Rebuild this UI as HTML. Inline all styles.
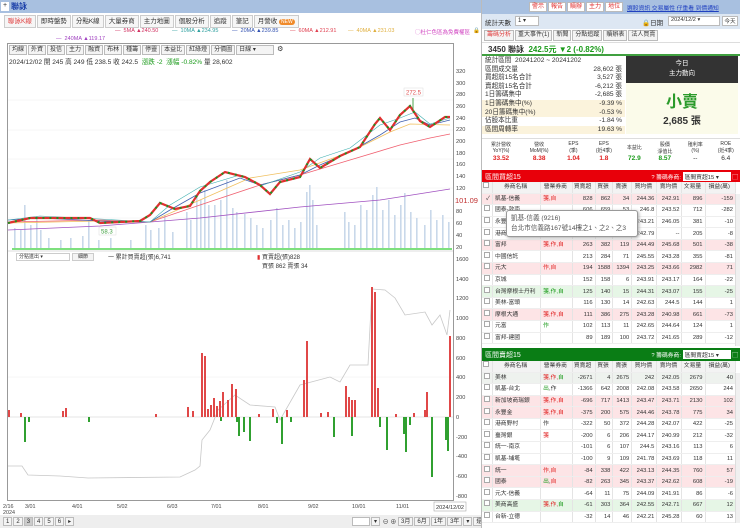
<!DOCTYPE html>
<html><head><meta charset="utf-8"><style>
*{box-sizing:border-box;margin:0;padding:0}
body{width:740px;height:528px;overflow:hidden;background:#fff;font-family:"Liberation Sans","Noto Sans CJK TC",sans-serif;font-size:7px;color:#333;position:relative}
.abs{position:absolute}
.tab{display:inline-block;border:1px solid #ccc;background:#f6f6f6;padding:1px 3px;margin-right:1px;font-size:6.5px;height:13px;line-height:10px}
.btn{display:inline-block;border:1px solid #bbb;background:#f4f4f4;padding:0 2px;font-size:6px;height:10px;line-height:8px;margin-right:1px;vertical-align:top}
table{border-collapse:collapse;width:100%;table-layout:fixed}
td{height:11.6px;line-height:10px;font-size:5.8px;border-right:1px solid #e4e4e4;border-bottom:1px solid #eee;text-align:right;padding:0 2px 0 0;white-space:nowrap;overflow:hidden}
td.n{text-align:left;padding-left:2px}
tr.h td{background:#f3f3f3;text-align:center;color:#333;height:11px}
tr.p td{background:#fde4e6}
tr.g td{background:#e6f6e6}
tr.gr td{background:#eef2ee}
.cb{display:inline-block;width:6px;height:6px;border:1px solid #aaa;background:#fff}
.r{color:#e02020}.gn{color:#1a9a1a}
.stat{display:flex;justify-content:space-between;height:8.6px;line-height:8.6px;font-size:6.6px;padding:0 3px;white-space:nowrap}
.nw{white-space:nowrap;overflow:hidden}
</style></head><body>

<div class="abs" style="left:0;top:0;width:481px;height:13px;background:#a8c0e0"></div>
<div class="abs" style="left:1px;top:2px;width:8px;height:9px;background:#fff;font-size:7px;line-height:8px;text-align:center">+</div>
<div class="abs" style="left:11px;top:1px;color:#1a3ea8;font-weight:bold;font-size:8px">聯詠</div>

<div class="abs nw" style="left:4px;top:15px">
<span class="tab" style="color:#e04040">聯詠K線</span><span class="tab">即時盤勢</span><span class="tab">分點K線</span><span class="tab">大量券商</span><span class="tab">主力地圖</span><span class="tab">個股分析</span><span class="tab">追蹤</span><span class="tab">筆記</span><span class="tab">月營收 <span style="background:#f08a2a;color:#fff;border-radius:4px;padding:0 2px;font-size:5px">NEW</span></span>
</div>

<div class="abs" style="left:0;top:28px;width:478px;font-size:5.5px;white-space:nowrap">
<span class="abs" style="left:115px;top:0;color:#d03060">— &nbsp;5MA ▲240.50</span>
<span class="abs" style="left:172px;top:0;color:#30a0a0">— &nbsp;10MA ▲234.95</span>
<span class="abs" style="left:232px;top:0;color:#3050b0">— &nbsp;20MA ▲239.85</span>
<span class="abs" style="left:290px;top:0;color:#e04050">— &nbsp;60MA ▲212.91</span>
<span class="abs" style="left:348px;top:0;color:#e0b040">— &nbsp;40MA ▲231.03</span>
<span class="abs" style="left:415px;top:0;color:#d040c0">◯杜仁色區為免費權區</span>
<span class="abs" style="left:473px;top:0;color:#000">🔒</span>
<span class="abs" style="left:56px;top:8px;color:#a040c0">— &nbsp;240MA ▲119.17</span>
</div>

<div class="abs" style="left:7px;top:43px;width:447px;height:458px;border:1px solid #999"></div>
<div class="abs nw" style="left:9px;top:45px">
<span class="btn">均線</span><span class="btn">外資</span><span class="btn">投信</span><span class="btn">主力</span><span class="btn">融資</span><span class="btn">布林</span><span class="btn">種籌</span><span class="btn">停靈</span><span class="btn">本益比</span><span class="btn">紅綠燈</span><span class="btn">分價圖</span><span class="btn" style="width:38px">日線 ▾</span> ⚙
</div>
<div class="abs" style="left:9px;top:56px;font-size:6.6px;white-space:nowrap">2024/12/02 開 245 高 249 低 238.5 收 242.5 &nbsp;<span class="gn">漲跌 -2 &nbsp;漲幅 -0.82%</span> 量 28,602</div>

<svg class="abs" style="left:0;top:0" width="481" height="528">
<g stroke="#eee" stroke-width="0.5">
<line x1="8" y1="100" x2="453" y2="100"/><line x1="8" y1="130" x2="453" y2="130"/><line x1="8" y1="159" x2="453" y2="159"/><line x1="8" y1="188" x2="453" y2="188"/><line x1="8" y1="218" x2="453" y2="218"/><line x1="8" y1="377" x2="453" y2="377"/>
</g>
<g fill="#c9d8ea">
<rect x="14" y="228" width="1.6" height="22"/><rect x="20" y="230" width="1.6" height="20"/><rect x="24" y="205" width="1.6" height="45"/><rect x="30" y="225" width="1.6" height="25"/><rect x="36" y="216" width="1.6" height="34"/><rect x="40" y="230" width="1.6" height="20"/><rect x="48" y="238" width="1.6" height="12"/><rect x="60" y="240" width="1.6" height="10"/><rect x="70" y="238" width="1.6" height="12"/><rect x="82" y="236" width="1.6" height="14"/><rect x="88" y="220" width="1.6" height="30"/><rect x="98" y="240" width="1.6" height="10"/><rect x="110" y="238" width="1.6" height="12"/><rect x="130" y="240" width="1.6" height="10"/><rect x="145" y="225" width="1.6" height="25"/><rect x="150" y="230" width="1.6" height="20"/><rect x="158" y="228" width="1.6" height="22"/><rect x="164" y="215" width="1.6" height="35"/><rect x="172" y="232" width="1.6" height="18"/><rect x="186" y="212" width="1.6" height="38"/><rect x="190" y="220" width="1.6" height="30"/><rect x="196" y="195" width="1.6" height="55"/><rect x="200" y="200" width="1.6" height="50"/><rect x="204" y="190" width="1.6" height="60"/><rect x="208" y="205" width="1.6" height="45"/><rect x="214" y="205" width="1.6" height="45"/><rect x="220" y="200" width="1.6" height="50"/><rect x="226" y="180" width="1.6" height="70"/><rect x="232" y="208" width="1.6" height="42"/><rect x="236" y="212" width="1.6" height="38"/><rect x="244" y="214" width="1.6" height="36"/><rect x="250" y="218" width="1.6" height="32"/><rect x="256" y="225" width="1.6" height="25"/><rect x="262" y="228" width="1.6" height="22"/><rect x="270" y="220" width="1.6" height="30"/><rect x="276" y="208" width="1.6" height="42"/><rect x="282" y="225" width="1.6" height="25"/><rect x="288" y="220" width="1.6" height="30"/><rect x="294" y="228" width="1.6" height="22"/><rect x="300" y="222" width="1.6" height="28"/><rect x="306" y="192" width="1.6" height="58"/><rect x="309" y="185" width="1.6" height="65"/><rect x="312" y="200" width="1.6" height="50"/><rect x="316" y="225" width="1.6" height="25"/><rect x="344" y="212" width="1.6" height="38"/><rect x="348" y="222" width="1.6" height="28"/><rect x="354" y="225" width="1.6" height="25"/><rect x="360" y="205" width="1.6" height="45"/><rect x="366" y="210" width="1.6" height="40"/><rect x="372" y="195" width="1.6" height="55"/><rect x="376" y="187" width="1.6" height="63"/><rect x="382" y="210" width="1.6" height="40"/><rect x="388" y="200" width="1.6" height="50"/><rect x="394" y="215" width="1.6" height="35"/><rect x="400" y="205" width="1.6" height="45"/><rect x="404" y="193" width="1.6" height="57"/><rect x="410" y="212" width="1.6" height="38"/><rect x="416" y="218" width="1.6" height="32"/><rect x="424" y="225" width="1.6" height="25"/><rect x="430" y="210" width="1.6" height="40"/><rect x="436" y="220" width="1.6" height="30"/><rect x="442" y="215" width="1.6" height="35"/><rect x="448" y="222" width="1.6" height="28"/>
</g>
<polyline fill="none" stroke="#a050c0" stroke-width="0.8" points="8,230 100,226 200,218 300,207 380,200 450,189"/>
<polyline fill="none" stroke="#f06070" stroke-width="0.8" points="8,222 100,220 150,222 200,205 260,185 300,175 350,160 400,145 430,138 450,134"/>
<polyline fill="none" stroke="#f0c060" stroke-width="0.8" points="8,223 100,221 150,222 200,200 250,178 300,170 350,152 390,132 410,124 450,125"/>
<polyline fill="none" stroke="#4060b0" stroke-width="0.8" points="8,220 40,218 100,221 150,222 170,210 200,193 240,178 260,185 300,175 320,165 350,152 380,135 400,122 415,118 430,125 450,120"/>
<polyline fill="none" stroke="#40b0b0" stroke-width="0.6" points="8,220 40,216 100,219 150,222 170,205 200,187 240,175 260,186 300,172 320,158 350,148 380,125 400,118 415,112 430,124 450,118"/>
<polyline fill="none" stroke="#e03030" stroke-width="2.2" points="8,223 30,218 60,218 90,218 100,223 120,222 140,221 150,215 160,203 175,209 190,206 200,191 210,182 225,172 245,177 260,185 270,194 280,182 300,177 310,159 320,168 340,156 360,147 375,124 380,118 390,130 400,115 410,106 420,121 430,127 445,117 450,117"/>
<polyline fill="none" stroke="#209020" stroke-width="2" stroke-dasharray="2,5" points="8,223 30,218 60,218 90,218 100,223 120,222 140,221 150,215 160,203 175,209 190,206 200,191 210,182 225,172 245,177 260,185 270,194 280,182 300,177 310,159 320,168 340,156 360,147 375,124 380,118 390,130 400,115 410,106 420,121 430,127 445,117 450,117"/>
<line x1="413" y1="98" x2="413" y2="110" stroke="#209020" stroke-width="0.8"/>
<rect x="404" y="88" width="19" height="8" fill="#fff" stroke="#ddd" stroke-width="0.5"/><text x="406" y="94.5" font-size="6" fill="#e05050">272.5</text>
<rect x="99" y="227" width="17" height="8" fill="#fff" stroke="#ddd" stroke-width="0.5"/><text x="101" y="233.5" font-size="6" fill="#40a040">58.3</text>
<rect x="12" y="248" width="440" height="2" fill="#7ee07e"/>
<line x1="8" y1="251" x2="453" y2="251" stroke="#bbb" stroke-width="0.6"/>
<g font-size="5.6" fill="#444">
<text x="456" y="73">320</text><text x="456" y="85">300</text><text x="456" y="96">280</text><text x="456" y="108">260</text><text x="456" y="120">240</text><text x="456" y="131">220</text><text x="456" y="143">200</text><text x="456" y="155">180</text><text x="456" y="166">160</text><text x="456" y="178">140</text><text x="456" y="190">120</text><text x="456" y="213">80</text><text x="456" y="225">60</text><text x="456" y="237">40</text><text x="456" y="249">20</text>
<text x="456" y="261">1600</text><text x="456" y="281">1400</text><text x="456" y="300">1200</text><text x="456" y="320">1000</text><text x="456" y="340">800</text><text x="456" y="360">600</text><text x="456" y="379">400</text><text x="456" y="399">200</text><text x="456" y="419">0</text><text x="456" y="439">-200</text><text x="456" y="458">-400</text><text x="456" y="478">-600</text><text x="456" y="498">-800</text>
</g>
<text x="455" y="203" font-size="7.5" fill="#c03030">101.09</text>
<line x1="8" y1="417" x2="453" y2="417" stroke="#ccc" stroke-width="0.5"/>
<polyline fill="none" stroke="#c8c8c8" stroke-width="0.8" points="8,466 22,466 28,475 60,476 88,478 180,477 195,470 200,466 202,440 210,430 218,410 235,395 250,405 275,407 280,420 300,385 330,377 340,382 350,365 368,365 372,289 385,290 395,298 405,315 425,312 432,325 440,315 447,335 450,310"/>
<g fill="#e04848">
<rect x="8" y="410" width="2" height="7"/><rect x="20" y="413" width="2" height="4"/><rect x="62" y="411" width="2" height="6"/><rect x="65" y="408" width="2" height="9"/><rect x="155" y="414" width="2" height="3"/><rect x="187" y="407" width="2" height="10"/><rect x="192" y="411" width="2" height="6"/><rect x="201" y="353" width="2" height="64"/><rect x="204" y="356" width="2" height="61"/><rect x="207" y="409" width="2" height="8"/><rect x="210" y="405" width="2" height="12"/><rect x="213" y="398" width="2" height="19"/><rect x="216" y="406" width="2" height="11"/><rect x="219" y="401" width="2" height="16"/><rect x="222" y="392" width="2" height="25"/><rect x="227" y="400" width="2" height="17"/><rect x="231" y="384" width="2" height="33"/><rect x="235" y="389" width="2" height="28"/><rect x="258" y="414" width="2" height="3"/><rect x="272" y="409" width="2" height="8"/><rect x="286" y="410" width="2" height="7"/><rect x="303" y="380" width="2" height="37"/><rect x="306" y="341" width="2" height="76"/><rect x="320" y="413" width="2" height="4"/><rect x="327" y="412" width="2" height="5"/><rect x="345" y="386" width="2" height="31"/><rect x="348" y="397" width="2" height="20"/><rect x="351" y="400" width="2" height="17"/><rect x="354" y="400" width="2" height="17"/><rect x="371" y="287" width="2" height="130"/><rect x="374" y="292" width="2" height="125"/><rect x="377" y="388" width="2" height="29"/><rect x="395" y="414" width="2" height="3"/><rect x="413" y="413" width="2" height="4"/><rect x="424" y="410" width="2" height="7"/><rect x="426" y="392" width="2" height="25"/><rect x="449" y="336" width="2" height="81"/>
</g>
<g fill="#30a030">
<rect x="24" y="417" width="2" height="25"/><rect x="28" y="417" width="2" height="5"/><rect x="88" y="417" width="2" height="5"/><rect x="220" y="417" width="2" height="4"/><rect x="236" y="417" width="2" height="5"/><rect x="238" y="417" width="2" height="19"/><rect x="243" y="417" width="2" height="15"/><rect x="249" y="417" width="2" height="24"/><rect x="276" y="417" width="2" height="6"/><rect x="281" y="417" width="2" height="27"/><rect x="290" y="417" width="2" height="5"/><rect x="333" y="417" width="2" height="20"/><rect x="351" y="417" width="2" height="19"/><rect x="379" y="417" width="2" height="10"/><rect x="386" y="417" width="2" height="33"/><rect x="403" y="417" width="2" height="17"/><rect x="405" y="417" width="2" height="35"/><rect x="409" y="417" width="2" height="8"/><rect x="431" y="417" width="2" height="60"/><rect x="445" y="417" width="2" height="23"/><rect x="447" y="417" width="2" height="34"/>
</g>
<g font-size="5.4" fill="#444">
<text x="3" y="508">2/16</text><text x="3" y="514">2024</text><text x="25" y="508">3/01</text><text x="72" y="508">4/01</text><text x="117" y="508">5/02</text><text x="167" y="508">6/03</text><text x="211" y="508">7/01</text><text x="258" y="508">8/01</text><text x="308" y="508">9/02</text><text x="352" y="508">10/01</text><text x="396" y="508">11/01</text>
</g>
<rect x="434" y="502" width="32" height="9" fill="#fff" stroke="#999" stroke-width="0.5"/><text x="436" y="509" font-size="5.6" fill="#333">2024/12/02</text>
</svg>
<div class="abs" style="left:16px;top:253px;width:54px;height:8px;border:1px solid #ccc;font-size:5px;line-height:6px;padding-left:2px">分點進出 ▾</div>
<div class="abs" style="left:72px;top:253px;width:22px;height:8px;border:1px solid #ccc;background:#f4f4f4;font-size:5px;line-height:6px;text-align:center">細節</div>
<div class="abs" style="left:108px;top:252px;font-size:6px">一 累計買賣超(張)6,741</div>
<div class="abs" style="left:257px;top:252px;font-size:6px"><span style="color:#e03030">▮</span> 買賣超(張)828<br>&nbsp;&nbsp; 買張 862 賣張 34</div>

<div class="abs" style="left:0;top:515px;width:481px;height:13px;background:#eee"></div>
<div class="abs nw" style="left:3px;top:517px;font-size:6.5px"><span class="btn" style="height:9px">1</span><span class="btn" style="height:9px">2</span><span class="btn" style="height:9px;background:#ccc">3</span><span class="btn" style="height:9px">4</span><span class="btn" style="height:9px">5</span><span class="btn" style="height:9px">6</span><span class="btn" style="height:9px">▸</span></div>
<div class="abs nw" style="left:352px;top:517px;font-size:6px"><span class="btn" style="width:18px;height:9px;background:#fff"></span><span class="btn" style="height:9px">▾</span> ⊖ ⊕ <span class="btn" style="height:9px">3月</span><span class="btn" style="height:9px">6月</span><span class="btn" style="height:9px">1年</span><span class="btn" style="height:9px">3年</span><span class="btn" style="height:9px">▾</span><span class="btn" style="height:9px">還原</span></div>

<!-- RIGHT PANEL -->
<div class="abs" style="left:481px;top:0;width:259px;height:528px;border-left:1px solid #bbb;background:#fff;overflow:hidden">
 <div class="abs" style="left:0;top:0;width:259px;height:14px;background:#a8c0e0;font-size:6px">
  <div class="abs nw" style="left:47px;top:2px"><span class="btn" style="color:#e03030;background:#fff">警示</span><span class="btn" style="color:#e03030;background:#fff">報告</span><span class="btn" style="color:#e03030;background:#fff">贖辦</span><span class="btn" style="color:#e03030;background:#fff">主力</span><span class="btn" style="color:#e03030;background:#fff">地位</span></div>
  <div class="abs nw" style="left:145px;top:3px;color:#2040c0;text-decoration:underline;font-size:5.8px">選股資訊 交易屬性 仔重看 到價通知</div>
 </div>
 <div class="abs" style="left:0;top:14px;width:259px;height:15px;background:#dde7f3;font-size:6.5px">
  <span class="abs nw" style="left:3px;top:3px">統計天數</span><span class="abs" style="left:33px;top:2px;width:24px;height:10px;background:#fff;border:1px solid #bbb;font-size:6px;padding-left:2px">1 ▾</span>
  <span class="abs nw" style="left:160px;top:3px">🔒日期</span><span class="abs nw" style="left:186px;top:2px;width:52px;height:10px;background:#fff;border:1px solid #bbb;font-size:5.6px;padding-left:2px">2024/12/2 ▾</span><span class="abs nw" style="left:240px;top:2px;width:16px;height:10px;background:#fff;border:1px solid #bbb;font-size:5.6px;text-align:center">今天</span>
 </div>
 <div class="abs nw" style="left:0;top:29px;width:259px;height:14px;padding:1px 2px;border-bottom:1px solid #ddd"><span class="btn" style="color:#e04040;height:11px">籌碼分析</span><span class="btn" style="height:11px">重大事件(1)</span><span class="btn" style="height:11px">新聞</span><span class="btn" style="height:11px">分點追蹤</span><span class="btn" style="height:11px">贖辦表</span><span class="btn" style="height:11px">法人買賣</span></div>
 <div class="abs nw" style="left:0;top:43px;width:259px;height:13px;font-size:8px;padding:1px 6px;border-bottom:2px solid #40a040;font-weight:bold">3450 聯詠 &nbsp;<span class="gn">242.5元 ▼2 (-0.82%)</span></div>
 <div class="abs" style="left:0;top:57px;width:143px">
  <div class="stat"><span>統計區間 &nbsp;20241202 ~ 20241202</span></div>
  <div class="stat"><span>區間成交量</span><span>28,602 張</span></div>
  <div class="stat"><span>買超前15名合計</span><span>3,527 張</span></div>
  <div class="stat"><span>賣超前15名合計</span><span>-6,212 張</span></div>
  <div class="stat"><span>1日籌碼集中</span><span>-2,685 張</span></div>
  <div class="stat" style="background:#fbf3dc"><span>1日籌碼集中(%)</span><span>-9.39 %</span></div>
  <div class="stat" style="background:#fbf3dc"><span>20日籌碼集中(%)</span><span>-0.53 %</span></div>
  <div class="stat"><span>佔股本比重</span><span>-1.84 %</span></div>
  <div class="stat" style="background:#fbf3dc"><span>區間周轉率</span><span>19.63 %</span></div>
 </div>
 <div class="abs" style="left:144px;top:56px;width:112px;height:78px;background:#fbfbea">
  <div style="background:#333;color:#fff;height:27px;text-align:center;font-size:6.5px;line-height:10px;padding-top:3px">今日<br>主力動向</div>
  <div style="text-align:center;color:#2a9a2a;font-size:16px;font-weight:bold;margin-top:5px">小賣</div>
  <div style="text-align:center;font-size:10px;font-weight:bold">2,685 張</div>
 </div>
 <div class="abs" style="left:0;top:138px;width:259px;height:28px;border-top:1px solid #ddd;font-size:5px;display:flex;text-align:center">
  <div style="flex:1"><div style="height:16px;padding-top:2px">累計營收<br>YoY(%)</div><div class="r" style="font-size:6.5px;font-weight:bold">33.52</div></div>
  <div style="flex:1"><div style="height:16px;padding-top:2px">營收<br>MoM(%)</div><div class="r" style="font-size:6.5px;font-weight:bold">8.38</div></div>
  <div style="flex:.8"><div style="height:16px;padding-top:2px">EPS<br>(季)</div><div class="r" style="font-size:6.5px;font-weight:bold">1.04</div></div>
  <div style="flex:.8"><div style="height:16px;padding-top:2px">EPS<br>(近4季)</div><div class="r" style="font-size:6.5px;font-weight:bold">1.8</div></div>
  <div style="flex:.8"><div style="height:16px;padding-top:5px">本益比</div><div class="gn" style="font-size:6.5px;font-weight:bold">72.9</div></div>
  <div style="flex:.8"><div style="height:16px;padding-top:2px">股價<br>淨值比</div><div class="gn" style="font-size:6.5px;font-weight:bold">8.57</div></div>
  <div style="flex:.8"><div style="height:16px;padding-top:2px">殖利率<br>(%)</div><div style="font-size:6.5px">--</div></div>
  <div style="flex:.8"><div style="height:16px;padding-top:2px">ROE<br>(近4季)</div><div style="font-size:6.5px">6.4</div></div>
 </div>

 <div class="abs nw" style="left:0;top:170px;width:259px;height:12px;background:#e8000a;color:#fff;font-size:7px;padding:2px 3px">區間買超15<span style="float:right;font-size:5.8px">? 籌碼券商: <span style="background:#fff;color:#333;padding:0 2px;display:inline-block;width:48px">區間買超15 ▾</span> ▢</span></div>
 <div class="abs" style="left:0;top:182px;width:254px">
 <table>
 <colgroup><col style="width:10px"><col style="width:46px"><col style="width:30px"><col style="width:22px"><col style="width:17px"><col style="width:18px"><col style="width:24px"><col style="width:24px"><col style="width:22px"><col style="width:29px"></colgroup>
 <tr class="h"><td><span class="cb"></span></td><td>券商名稱</td><td>營業券商</td><td>買賣超</td><td>買張</td><td>賣張</td><td>買均價</td><td>賣均價</td><td>文易量</td><td>損益(萬)</td></tr>
 <tr class="p"><td>✓</td><td class="n">凱基-信義</td><td class="n r">箋,自</td><td>828</td><td>862</td><td>34</td><td>244.36</td><td>242.91</td><td>896</td><td>-159</td></tr>
 <tr><td><span class="cb"></span></td><td class="n">國泰-敦南</td><td></td><td>606</td><td>659</td><td>53</td><td>246.8</td><td>243.52</td><td>712</td><td>-282</td></tr>
 <tr><td><span class="cb"></span></td><td class="n">永豐金</td><td></td><td>310</td><td>345</td><td>35</td><td>243.21</td><td>246.05</td><td>381</td><td>-10</td></tr>
 <tr><td><span class="cb"></span></td><td class="n">港商</td><td></td><td>201</td><td>203</td><td>2</td><td>242.79</td><td>--</td><td>205</td><td>-8</td></tr>
 <tr class="p"><td><span class="cb"></span></td><td class="n">富邦</td><td class="n r">箋,作,自</td><td>263</td><td>382</td><td>119</td><td>244.49</td><td>245.68</td><td>501</td><td>-38</td></tr>
 <tr><td><span class="cb"></span></td><td class="n">中國信託</td><td></td><td>213</td><td>284</td><td>71</td><td>245.55</td><td>243.28</td><td>355</td><td>-81</td></tr>
 <tr class="p"><td><span class="cb"></span></td><td class="n">元大</td><td class="n r">作,自</td><td>194</td><td>1588</td><td>1394</td><td>243.25</td><td>243.66</td><td>2982</td><td>71</td></tr>
 <tr><td><span class="cb"></span></td><td class="n">京城</td><td></td><td>152</td><td>158</td><td>6</td><td>243.91</td><td>243.17</td><td>164</td><td>-22</td></tr>
 <tr class="g"><td><span class="cb"></span></td><td class="n">台灣摩根士丹利</td><td class="n gn">箋,作,自</td><td>125</td><td>140</td><td>15</td><td>244.31</td><td>243.07</td><td>155</td><td>-25</td></tr>
 <tr><td><span class="cb"></span></td><td class="n">美林-富頭</td><td></td><td>116</td><td>130</td><td>14</td><td>242.63</td><td>244.5</td><td>144</td><td>1</td></tr>
 <tr class="p"><td><span class="cb"></span></td><td class="n">摩根大通</td><td class="n r">箋,作,自</td><td>111</td><td>386</td><td>275</td><td>243.28</td><td>240.98</td><td>661</td><td>-73</td></tr>
 <tr><td><span class="cb"></span></td><td class="n">元富</td><td class="n gn">作</td><td>102</td><td>113</td><td>11</td><td>242.65</td><td>244.64</td><td>124</td><td>1</td></tr>
 <tr><td><span class="cb"></span></td><td class="n">富邦-建國</td><td></td><td>89</td><td>189</td><td>100</td><td>243.72</td><td>241.65</td><td>289</td><td>-12</td></tr>
 </table></div>
 <div class="abs nw" style="left:24px;top:210px;width:132px;height:27px;background:#fff;border:1px solid #999;border-radius:3px;font-size:6.6px;padding:3px 4px;color:#555;line-height:10px;box-shadow:1px 1px 3px #aaa">凱基-信義 (9216)<br>台北市信義路167號14樓之1、之2、之3</div>

 <div class="abs nw" style="left:0;top:348px;width:259px;height:13px;background:#0a7d15;color:#fff;font-size:7px;padding:2px 3px">區間賣超15<span style="float:right;font-size:5.8px">? 籌碼券商: <span style="background:#fff;color:#333;padding:0 2px;display:inline-block;width:48px">區間賣超15 ▾</span> ▢</span></div>
 <div class="abs" style="left:0;top:361px;width:254px">
 <table>
 <colgroup><col style="width:10px"><col style="width:46px"><col style="width:30px"><col style="width:22px"><col style="width:17px"><col style="width:18px"><col style="width:24px"><col style="width:24px"><col style="width:22px"><col style="width:29px"></colgroup>
 <tr class="h"><td><span class="cb"></span></td><td>券商名稱</td><td>營業券商</td><td>買賣超</td><td>買張</td><td>賣張</td><td>買均價</td><td>賣均價</td><td>文易量</td><td>損益(萬)</td></tr>
 <tr class="gr"><td><span class="cb"></span></td><td class="n">美林</td><td class="n r">箋,作,<span class="gn">自</span></td><td>-2671</td><td>4</td><td>2675</td><td>242</td><td>242.05</td><td>2679</td><td>40</td></tr>
 <tr><td><span class="cb"></span></td><td class="n">凱基-台北</td><td class="n"><span class="gn">出</span>,作</td><td>-1366</td><td>642</td><td>2008</td><td>242.08</td><td>243.58</td><td>2650</td><td>244</td></tr>
 <tr class="p"><td><span class="cb"></span></td><td class="n">新加坡商瑞銀</td><td class="n r">箋,作,自</td><td>-696</td><td>717</td><td>1413</td><td>243.47</td><td>243.71</td><td>2130</td><td>102</td></tr>
 <tr class="p"><td><span class="cb"></span></td><td class="n">永豐金</td><td class="n r">箋,作,自</td><td>-375</td><td>200</td><td>575</td><td>244.46</td><td>243.78</td><td>775</td><td>34</td></tr>
 <tr><td><span class="cb"></span></td><td class="n">港商野村</td><td class="n">作</td><td>-322</td><td>50</td><td>372</td><td>244.28</td><td>242.07</td><td>422</td><td>-25</td></tr>
 <tr><td><span class="cb"></span></td><td class="n">臺灣銀</td><td class="n r">箋</td><td>-200</td><td>6</td><td>206</td><td>244.17</td><td>240.99</td><td>212</td><td>-32</td></tr>
 <tr><td><span class="cb"></span></td><td class="n">統一-南京</td><td></td><td>-101</td><td>6</td><td>107</td><td>244.5</td><td>243.16</td><td>113</td><td>6</td></tr>
 <tr><td><span class="cb"></span></td><td class="n">凱基-埔墘</td><td></td><td>-100</td><td>9</td><td>109</td><td>241.78</td><td>243.69</td><td>118</td><td>11</td></tr>
 <tr class="p"><td><span class="cb"></span></td><td class="n">統一</td><td class="n r">作,自</td><td>-84</td><td>338</td><td>422</td><td>243.13</td><td>244.35</td><td>760</td><td>57</td></tr>
 <tr class="p"><td><span class="cb"></span></td><td class="n">國泰</td><td class="n"><span class="gn">出</span>,<span class="r">自</span></td><td>-82</td><td>263</td><td>345</td><td>243.37</td><td>242.62</td><td>608</td><td>-19</td></tr>
 <tr><td><span class="cb"></span></td><td class="n">元大-信義</td><td></td><td>-64</td><td>11</td><td>75</td><td>244.09</td><td>241.91</td><td>86</td><td>-6</td></tr>
 <tr class="g"><td><span class="cb"></span></td><td class="n">美商高盛</td><td class="n r">箋,作,<span class="gn">自</span></td><td>-61</td><td>303</td><td>364</td><td>242.55</td><td>242.71</td><td>667</td><td>12</td></tr>
 <tr><td><span class="cb"></span></td><td class="n">台新-立德</td><td></td><td>-32</td><td>14</td><td>46</td><td>242.21</td><td>245.28</td><td>60</td><td>13</td></tr>
 </table></div>
 <div class="abs" style="left:253px;top:194px;width:5px;height:152px;background:#f0f0f0;border-left:1px solid #ddd"></div>
 <div class="abs" style="left:253px;top:373px;width:5px;height:150px;background:#f0f0f0;border-left:1px solid #ddd"></div>
</div>
</body></html>
